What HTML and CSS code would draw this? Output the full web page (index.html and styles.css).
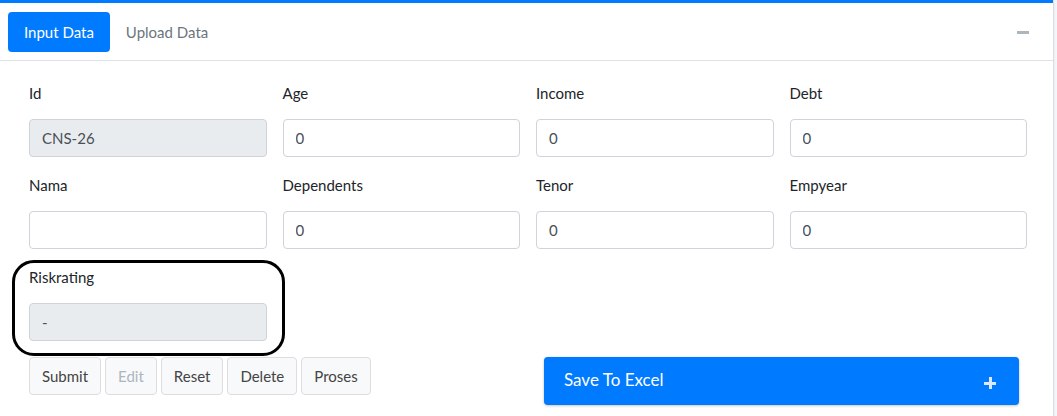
FILE: index.html
```html
<!DOCTYPE html>
<html>
<head>
<meta charset="utf-8">
<link rel="stylesheet" href="styles.css">
</head>
<body>
<div class="card">
  <div class="card-header">
    <ul class="tabs">
      <li><a class="tab active">Input Data</a></li>
      <li><a class="tab">Upload Data</a></li>
    </ul>
    <button class="tool" aria-label="collapse"><span class="minus"></span></button>
  </div>
  <div class="card-body">
    <div class="grid">
      <div class="group"><label>Id</label><input class="ctl" value="CNS-26" disabled></div>
      <div class="group"><label>Age</label><input class="ctl" value="0"></div>
      <div class="group"><label>Income</label><input class="ctl" value="0"></div>
      <div class="group"><label>Debt</label><input class="ctl" value="0"></div>
      <div class="group"><label>Nama</label><input class="ctl" value=""></div>
      <div class="group"><label>Dependents</label><input class="ctl" value="0"></div>
      <div class="group"><label>Tenor</label><input class="ctl" value="0"></div>
      <div class="group"><label>Empyear</label><input class="ctl" value="0"></div>
      <div class="group risk"><label>Riskrating</label><input class="ctl" value="-" disabled><span class="mark"></span></div>
      <div class="actions">
        <button class="btn">Submit</button>
        <button class="btn" disabled>Edit</button>
        <button class="btn">Reset</button>
        <button class="btn">Delete</button>
        <button class="btn">Proses</button>
      </div>
      <div class="excel">
        <span>Save To Excel</span>
        <span class="plus"></span>
      </div>
    </div>
  </div>
</div>
</body>
</html>
```
FILE: styles.css
```css
* { box-sizing: border-box; }
html, body { margin: 0; padding: 0; }
body {
  background: #f4f6f9;
  font-family: "Lato", "Noto Sans", sans-serif;
  font-size: 15px;
  color: #212529;
  overflow: hidden;
}
.card {
  width: 1053px;
  height: 430px;
  background: #fff;
  border-top: 3px solid #007bff;
  box-shadow: 0 0 1px rgba(0,0,0,.3), 0 1px 3px rgba(0,0,0,.15);
}
.card-header {
  display: flex;
  align-items: center;
  justify-content: space-between;
  padding: 9px 24px 8px 8px;
  border-bottom: 1px solid #dee2e6;
}
.tabs {
  list-style: none;
  margin: 0;
  padding: 0;
  display: flex;
}
.tab {
  display: block;
  padding: 8px 16px;
  line-height: 24px;
  border-radius: 4px;
  color: #6c757d;
}
.tab.active {
  background: #007bff;
  color: #fff;
}
.tool {
  border: 0;
  background: none;
  padding: 0;
  width: 12px;
  height: 12px;
  display: flex;
  align-items: center;
}
.minus {
  display: block;
  width: 12px;
  height: 3px;
  background: #adb5bd;
}
.card-body {
  padding: 21px 26px 0 29px;
}
.grid {
  display: grid;
  grid-template-columns: repeat(4, 237.5px);
  column-gap: 16px;
}
.group {
  margin-bottom: 17px;
}
.group label {
  display: block;
  line-height: 22px;
  height: 22px;
  margin-bottom: 15px;
}
.ctl {
  display: block;
  width: 100%;
  height: 38px;
  padding: 6px 12px;
  font: inherit;
  color: #495057;
  background: #fff;
  border: 1px solid #ced4da;
  border-radius: 4px;
}
.ctl:disabled {
  background: #e9ecef;
  color: #495057;
}
.risk {
  position: relative;
  grid-column: 1;
  margin-bottom: 16px;
}
.mark {
  position: absolute;
  left: -17px;
  top: -6px;
  width: 273px;
  height: 96px;
  border: 3px solid #000;
  border-radius: 22px;
  pointer-events: none;
}
.actions {
  grid-column: 1 / 3;
  grid-row: 4;
  display: flex;
  gap: 4px;
  align-items: flex-start;
}
.btn {
  font: inherit;
  height: 38px;
  padding: 6px 12px;
  line-height: 24px;
  color: #444;
  background: #f8f9fa;
  border: 1px solid #ddd;
  border-radius: 4px;
}
.btn:disabled {
  color: #adb5bd;
}
.excel {
  grid-column: 3 / 5;
  grid-row: 4;
  margin: 0 8px;
  height: 48px;
  background: #007bff;
  color: #fff;
  border-radius: 4px;
  box-shadow: 0 0 1px rgba(0,0,0,.2), 0 1px 3px rgba(0,0,0,.2);
  display: flex;
  justify-content: space-between;
  align-items: center;
  padding: 0 23px 0 20px;
  font-size: 17px;
}
.excel span:first-child { margin-top: -3px; }
.plus {
  position: relative;
  width: 12px;
  height: 12px;
  margin-top: 4px;
}
.plus::before, .plus::after {
  content: "";
  position: absolute;
  background: #dbe9fb;
}
.plus::before { left: 0; top: 4.5px; width: 12px; height: 3px; }
.plus::after { left: 4.5px; top: 0; width: 3px; height: 12px; }
```
